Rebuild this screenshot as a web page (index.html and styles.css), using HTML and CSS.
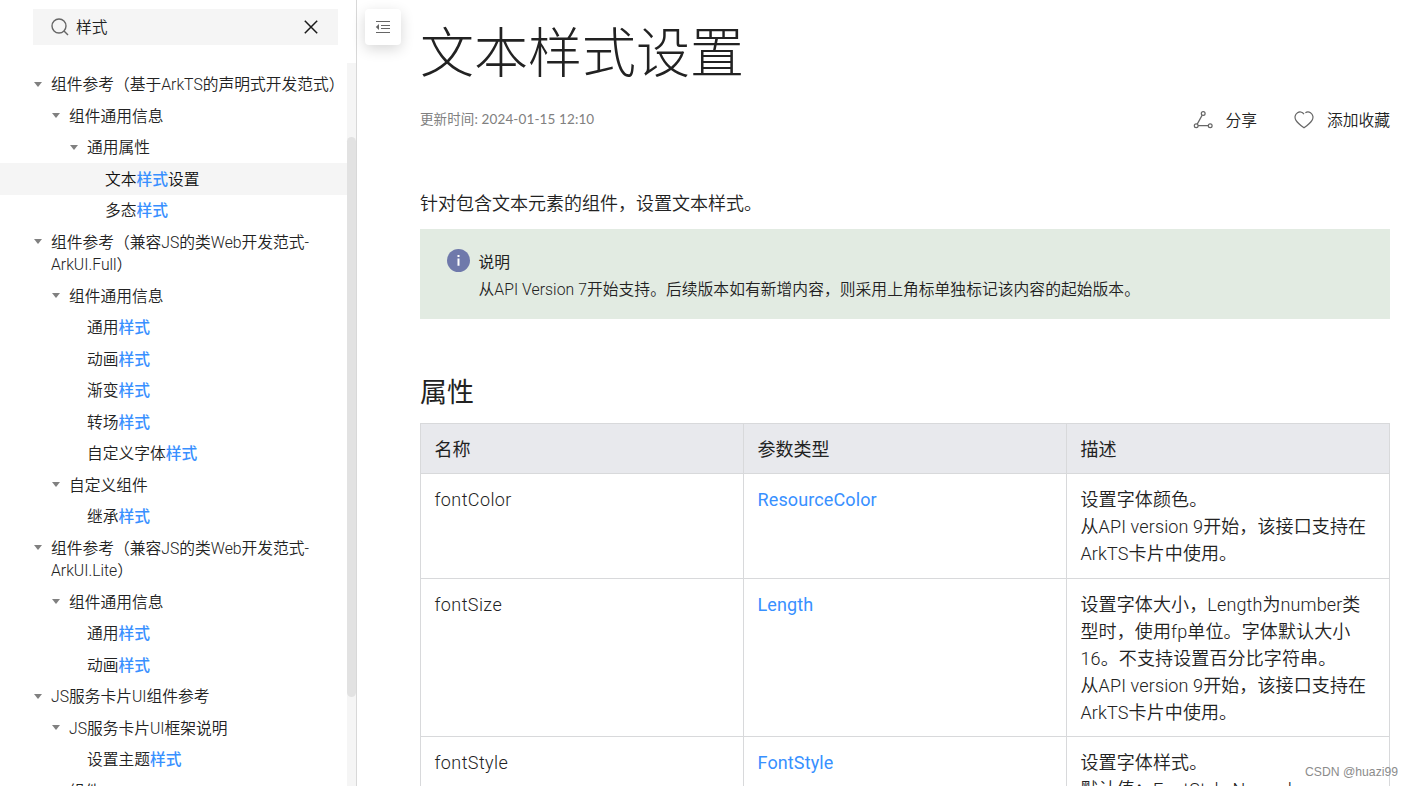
FILE: index.html
```html
<!DOCTYPE html>
<html lang="zh-CN">
<head>
    <meta charset="UTF-8">
    <meta name="viewport" content="width=device-width, initial-scale=1.0">
    <title>文本样式设置</title>
    <link rel="stylesheet" href="styles.css">
</head>
<body>

<div class="page">
    <!-- Sidebar -->
    <aside class="sidebar">
        <div class="search">
            <svg class="search-icon" viewBox="0 0 18 18" width="18" height="18">
                <circle cx="8" cy="8" r="7"/>
                <path d="M13 13l4 4"/>
            </svg>
            <span class="search-text">样式</span>
            <svg class="clear-icon" viewBox="0 0 14 14" width="14" height="14">
                <path d="M0.8 0.8l12.4 12.4M13.2 0.8L0.8 13.2"/>
            </svg>
        </div>

        <div class="tree-wrap">
            <ul class="tree">
                <li class="node level-1 open">组件参考（基于ArkTS的声明式开发范式）</li>
                <li class="node level-2 open">组件通用信息</li>
                <li class="node level-3 open">通用属性</li>
                <li class="node level-4 active">文本<em>样式</em>设置</li>
                <li class="node level-4">多态<em>样式</em></li>
                <li class="node level-1 open">组件参考（兼容JS的类Web开发范式-<br>ArkUI.Full）</li>
                <li class="node level-2 open">组件通用信息</li>
                <li class="node level-3">通用<em>样式</em></li>
                <li class="node level-3">动画<em>样式</em></li>
                <li class="node level-3">渐变<em>样式</em></li>
                <li class="node level-3">转场<em>样式</em></li>
                <li class="node level-3">自定义字体<em>样式</em></li>
                <li class="node level-2 open">自定义组件</li>
                <li class="node level-3">继承<em>样式</em></li>
                <li class="node level-1 open">组件参考（兼容JS的类Web开发范式-<br>ArkUI.Lite）</li>
                <li class="node level-2 open">组件通用信息</li>
                <li class="node level-3">通用<em>样式</em></li>
                <li class="node level-3">动画<em>样式</em></li>
                <li class="node level-1 open">JS服务卡片UI组件参考</li>
                <li class="node level-2 open">JS服务卡片UI框架说明</li>
                <li class="node level-3">设置主题<em>样式</em></li>
                <li class="node level-2">组件</li>
            </ul>
            <div class="scrollbar"><div class="thumb"></div></div>
        </div>
    </aside>

    <!-- Collapse button -->
    <div class="gutter">
        <button class="collapse">
            <svg viewBox="0 0 16 14" width="16" height="14">
                <path d="M1 1.5h14M6 5.5h9M6 8.5h9M1 12.5h14"/>
                <path class="arrow" d="M4 4v6L0.8 7z"/>
            </svg>
        </button>
    </div>

    <!-- Document -->
    <main class="content">
        <h1>文本样式设置</h1>
        <div class="meta">
            <span class="date">更新时间: 2024-01-15 12:10</span>
            <div class="actions">
                <span class="action">
                    <svg viewBox="0 0 20 18" width="20" height="18">
                        <circle cx="10.2" cy="2.5" r="1.9"/>
                        <circle cx="3.2" cy="14.7" r="1.9"/>
                        <circle cx="17.2" cy="14.7" r="1.9"/>
                        <path d="M9.2 4.1L4.2 13.1M5.1 14.7h10.2"/>
                    </svg>
                    分享
                </span>
                <span class="action">
                    <svg viewBox="0 0 20 18" width="20" height="18">
                        <path d="M10 3.2C8.3 0.6 5.4 0.5 3.5 1.7C0.9 3.4 0.3 6.8 2 9.4C3.6 12 6.6 14.4 10 16.8C13.4 14.4 16.4 12 18 9.4C19.7 6.8 19.1 3.4 16.5 1.7C14.9 0.7 12.9 0.7 11.4 1.8"/>
                    </svg>
                    添加收藏
                </span>
            </div>
        </div>

        <p class="intro">针对包含文本元素的组件，设置文本样式。</p>

        <div class="note">
            <svg class="note-icon" viewBox="0 0 24 24" width="24" height="24">
                <circle cx="11.5" cy="11.5" r="11.5"/>
                <path d="M10.5 6h2v2h-2zM10.5 9.5h2v7.2h-2z"/>
            </svg>
            <div class="note-body">
                <div class="note-title">说明</div>
                <div class="note-text">从API Version 7开始支持。后续版本如有新增内容，则采用上角标单独标记该内容的起始版本。</div>
            </div>
        </div>

        <h2>属性</h2>

        <table class="props">
            <thead>
                <tr><th>名称</th><th>参数类型</th><th>描述</th></tr>
            </thead>
            <tbody>
                <tr>
                    <td class="name">fontColor</td>
                    <td><a>ResourceColor</a></td>
                    <td>设置字体颜色。<br>从API version 9开始，该接口支持在<br>ArkTS卡片中使用。</td>
                </tr>
                <tr>
                    <td class="name">fontSize</td>
                    <td><a>Length</a></td>
                    <td>设置字体大小，Length为number类<br>型时，使用fp单位。字体默认大小<br>16。不支持设置百分比字符串。<br>从API version 9开始，该接口支持在<br>ArkTS卡片中使用。</td>
                </tr>
                <tr>
                    <td class="name">fontStyle</td>
                    <td><a>FontStyle</a></td>
                    <td>设置字体样式。<br>默认值：FontStyle.Normal</td>
                </tr>
            </tbody>
        </table>
    </main>

    <div class="watermark">CSDN @huazi99</div>
</div>

</body>
</html>
```
FILE: styles.css
```css
* {
    box-sizing: border-box;
}
body {
    margin: 0;
    font-family: Roboto, "Noto Sans CJK SC", sans-serif;
    font-size: 18px;
    font-weight: 350;
    line-height: 27px;
    color: #222;
    background-color: #fff;
}
.page {
    position: relative;
    display: flex;
    height: 786px;
    overflow: hidden;
}
svg {
    fill: none;
    stroke: #666;
    stroke-width: 1.4;
    flex: none;
}

/* Sidebar */
.sidebar {
    display: flex;
    flex-direction: column;
    width: 357px;
    flex: none;
    border-right: 1px solid #d8d8d8;
}
.search {
    display: flex;
    align-items: center;
    flex: none;
    height: 36px;
    margin: 9px 18px 18px 33px;
    padding: 0 20px 0 18px;
    background-color: #f5f5f5;
    font-size: 15.75px;
}
.search-text {
    flex: 1;
    margin-left: 7px;
}
.clear-icon {
    stroke: #191919;
    stroke-width: 1.5;
}
.tree-wrap {
    display: flex;
    flex: 1;
    min-height: 0;
}
.tree {
    flex: 1;
    margin: 0;
    padding: 5.9px 0 0;
    list-style: none;
}
.node {
    position: relative;
    padding: 5.5px 0 3.5px;
    font-size: 15.75px;
    line-height: 22.5px;
    white-space: nowrap;
}
.level-1 { padding-left: 51px; }
.level-2 { padding-left: 69px; }
.level-3 { padding-left: 87px; }
.level-4 { padding-left: 105px; }
.node em {
    font-style: normal;
    font-weight: 500;
    color: #3890ff;
}
.node.active {
    background-color: #f5f5f5;
    color: #111;
}
.open::before {
    content: "";
    position: absolute;
    top: 13px;
    margin-left: -17.5px;
    border: 4.5px solid transparent;
    border-top: 5px solid #808080;
    border-bottom: 0;
}
.scrollbar {
    width: 9px;
    padding-top: 74px;
    background-color: #f5f5f5;
}
.thumb {
    height: 560px;
    border-radius: 5px;
    background-color: #e2e2e2;
}

/* Collapse button */
.gutter {
    width: 63px;
    flex: none;
    padding: 9px 0 0 8px;
}
.collapse {
    display: flex;
    align-items: center;
    justify-content: center;
    width: 36px;
    height: 36px;
    padding: 0;
    border: 0;
    border-radius: 4px;
    background-color: #fff;
    box-shadow: 0 4px 14px rgba(0, 0, 0, 0.16);
}
.collapse svg {
    stroke-width: 1.1;
}
.collapse .arrow {
    fill: #666;
    stroke: none;
}

/* Document */
.content {
    width: 970px;
    flex: none;
}
h1 {
    margin: 19px 0 0;
    font-size: 54px;
    font-weight: 300;
    line-height: 72px;
}
.meta {
    display: flex;
    justify-content: space-between;
    align-items: center;
    height: 27px;
    margin-top: 15px;
}
.date {
    font-family: Lato, "Noto Sans CJK SC", sans-serif;
    font-size: 13.5px;
    font-weight: 400;
    letter-spacing: 0.12px;
    color: #808080;
}
.actions {
    display: flex;
    gap: 37px;
    padding-top: 1px;
    font-size: 15.75px;
}
.action {
    display: flex;
    align-items: center;
    gap: 13px;
}
.action svg {
    margin-top: -1px;
    stroke-width: 1.2;
}
.intro {
    margin: 57px 0 12px;
}
.note {
    display: flex;
    height: 90px;
    padding: 20px 27px;
    background-color: #e2ebe2;
}
.note-icon {
    fill: #6f79ab;
    stroke: none;
}
.note-icon path {
    fill: #fff;
}
.note-body {
    margin-left: 7.5px;
    font-size: 15.75px;
    letter-spacing: 0.05px;
    white-space: nowrap;
}
.note-title {
    font-weight: 400;
}
h2 {
    margin: 56px 0 11px;
    font-size: 27px;
    font-weight: 400;
    line-height: 37px;
}
.props {
    width: 970px;
    table-layout: fixed;
    border-collapse: collapse;
}
.props th,
.props td {
    padding: 12px 13.5px 10.5px;
    border: 1px solid #d8d9db;
    text-align: left;
    vertical-align: top;
    white-space: nowrap;
}
.props th {
    padding-bottom: 10px;
    background-color: #e8e9ed;
    font-weight: 400;
}
.props td {
    letter-spacing: 0.12px;
}
.props .name {
    letter-spacing: 0.4px;
}
.props a {
    color: #3890ff;
    font-weight: 400;
}

.watermark {
    position: absolute;
    right: 15px;
    bottom: 5px;
    font-family: "Liberation Sans", sans-serif;
    font-size: 12.2px;
    line-height: 18px;
    color: #8c8c8c;
}
```
